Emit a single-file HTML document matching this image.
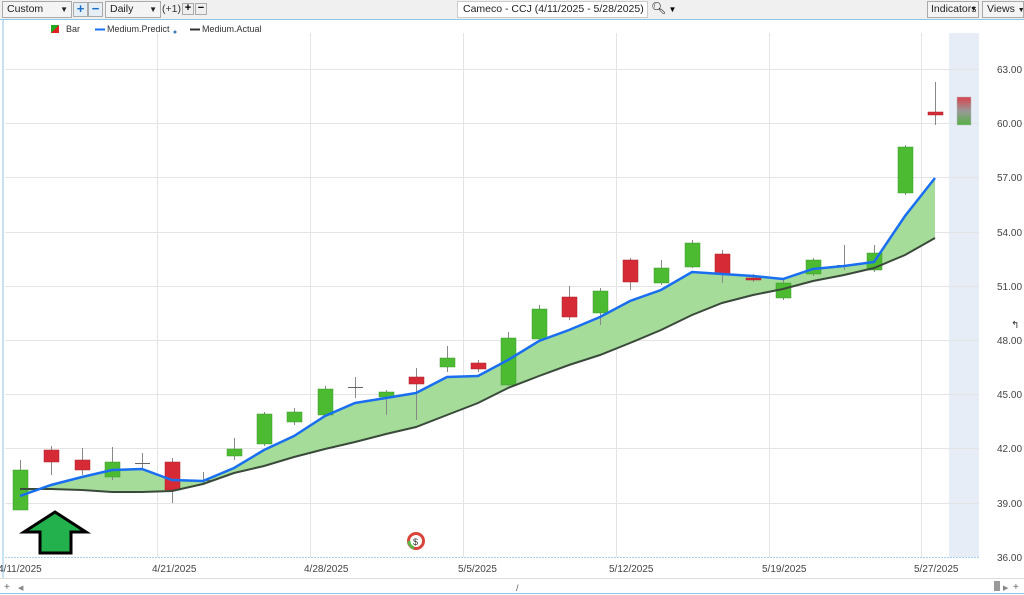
<!DOCTYPE html>
<html><head><meta charset="utf-8"><style>
body{margin:0;width:1024px;height:595px;overflow:hidden;background:#fff;font-family:"Liberation Sans",sans-serif;}
.tb{position:absolute;left:0;top:0;width:1024px;height:19px;background:#f0f0f0;border-bottom:1px solid #8ec6ea;}
.b{position:absolute;top:1px;height:15px;border:1px solid #aaa;background:#f4f4f4;font-size:10.5px;line-height:15px;color:#222;padding-left:4px;box-sizing:content-box;white-space:nowrap;overflow:hidden}
.sq{position:absolute;top:2px;width:13px;height:13px;border:1px solid #aaa;background:#e6eef6;color:#1a6fc4;font-weight:bold;font-size:13px;line-height:12px;text-align:center}
</style></head><body>
<div class="tb">
<div class="b" style="left:2px;width:64px">Custom<span style="position:absolute;right:3px;font-size:8px">▼</span></div>
<div class="sq" style="left:73px">+</div><div class="sq" style="left:88px">−</div>
<div class="b" style="left:105px;width:50px">Daily<span style="position:absolute;right:3px;font-size:8px">▼</span></div>
<div style="position:absolute;left:162px;top:3px;font-size:10.5px;color:#333">(+1)</div>
<div class="sq" style="left:182px;width:10px;height:10px;top:3px;color:#000;font-size:11px;line-height:9px;background:#eee">+</div>
<div class="sq" style="left:195px;width:10px;height:10px;top:3px;color:#000;font-size:11px;line-height:9px;background:#eee">−</div>
<div class="b" style="left:457px;top:1px;width:184px;background:#fff;border-color:#ccc;padding-left:5px">Cameco - CCJ (4/11/2025 - 5/28/2025)</div>
<div style="position:absolute;left:651px;top:1px;font-size:12px">&#x1F50D;&#xFE0E;<span style="font-size:8px"> ▼</span></div>
<div class="b" style="left:927px;width:47px;padding-left:3px">Indicators<span style="font-size:7px;position:absolute;right:1px;top:0">▼</span></div>
<div class="b" style="left:982px;width:36px">Views <span style="font-size:7px">▼</span></div>
</div>
<svg width="1024" height="595" style="position:absolute;left:0;top:0" font-family="Liberation Sans" >
<line x1="3" y1="20" x2="3" y2="578" stroke="#8ec6ea"/>
<rect x="949" y="33" width="30" height="524" fill="#e6edf6"/>
<g stroke="#e4e4e4" stroke-width="1">
<line x1="5" x2="979" y1="69.5" y2="69.5"/><line x1="5" x2="979" y1="123.5" y2="123.5"/><line x1="5" x2="979" y1="177.5" y2="177.5"/><line x1="5" x2="979" y1="232.5" y2="232.5"/><line x1="5" x2="979" y1="286.5" y2="286.5"/><line x1="5" x2="979" y1="340.5" y2="340.5"/><line x1="5" x2="979" y1="394.5" y2="394.5"/><line x1="5" x2="979" y1="448.5" y2="448.5"/><line x1="5" x2="979" y1="503.5" y2="503.5"/>
<line y1="33" y2="557" x1="157.5" x2="157.5"/><line y1="33" y2="557" x1="310.5" x2="310.5"/><line y1="33" y2="557" x1="463.5" x2="463.5"/><line y1="33" y2="557" x1="616.5" x2="616.5"/><line y1="33" y2="557" x1="769.5" x2="769.5"/><line y1="33" y2="557" x1="921.5" x2="921.5"/>
</g>
<line x1="5" x2="979" y1="557.5" y2="557.5" stroke="#a8d0ec" stroke-dasharray="2,1"/>
<g font-size="10" fill="#444">
<text x="997" y="73">63.00</text><text x="997" y="127">60.00</text><text x="997" y="181">57.00</text><text x="997" y="236">54.00</text><text x="997" y="290">51.00</text><text x="997" y="344">48.00</text><text x="997" y="398">45.00</text><text x="997" y="452">42.00</text><text x="997" y="507">39.00</text><text x="997" y="561">36.00</text>
<text x="-2" y="572">4/11/2025</text><text x="152" y="572">4/21/2025</text><text x="304" y="572">4/28/2025</text><text x="458" y="572">5/5/2025</text><text x="609" y="572">5/12/2025</text><text x="762" y="572">5/19/2025</text><text x="914" y="572">5/27/2025</text>
</g>
<polygon fill="#a6dc9a" points="20,496 51,485 82,477 112,470 142,469 172,480 203,481 234,468 264,450 294,436 325,416 355,403 386,398 416,393 447,377 478,376 508,360 539,341 569,330 600,317 630,301 661,290 692,272 722,274 753,276 783,279 813,269 844,266 874,262 905,216 935,178 935,238 905,255 874,268 844,275 813,281 783,289 753,295 722,303 692,315 661,330 630,343 600,355 569,365 539,376 508,388 478,403 447,415 416,427 386,434 355,442 325,449 294,457 264,466 234,473 203,484 172,491 142,492 112,492 82,490 51,489 20,489"/>
<g stroke="#888" stroke-width="1">
<line x1="20.5" x2="20.5" y1="460" y2="510"/><line x1="51.5" x2="51.5" y1="446" y2="475"/><line x1="82.5" x2="82.5" y1="448" y2="475"/><line x1="112.5" x2="112.5" y1="447" y2="480"/><line x1="142.5" x2="142.5" y1="453" y2="470"/><line x1="172.5" x2="172.5" y1="458" y2="503"/><line x1="203.5" x2="203.5" y1="472" y2="485"/><line x1="234.5" x2="234.5" y1="438" y2="460"/><line x1="264.5" x2="264.5" y1="412" y2="446"/><line x1="294.5" x2="294.5" y1="408" y2="425"/><line x1="325.5" x2="325.5" y1="386" y2="416"/><line x1="355.5" x2="355.5" y1="377" y2="398"/><line x1="386.5" x2="386.5" y1="390" y2="415"/><line x1="416.5" x2="416.5" y1="368" y2="420"/><line x1="447.5" x2="447.5" y1="346" y2="372"/><line x1="478.5" x2="478.5" y1="360" y2="372"/><line x1="508.5" x2="508.5" y1="332" y2="386"/><line x1="539.5" x2="539.5" y1="305" y2="340"/><line x1="569.5" x2="569.5" y1="286" y2="320"/><line x1="600.5" x2="600.5" y1="288" y2="325"/><line x1="630.5" x2="630.5" y1="258" y2="290"/><line x1="661.5" x2="661.5" y1="260" y2="285"/><line x1="692.5" x2="692.5" y1="240" y2="268"/><line x1="722.5" x2="722.5" y1="250" y2="283"/><line x1="753.5" x2="753.5" y1="274" y2="282"/><line x1="783.5" x2="783.5" y1="280" y2="300"/><line x1="813.5" x2="813.5" y1="258" y2="276"/><line x1="844.5" x2="844.5" y1="245" y2="270"/><line x1="874.5" x2="874.5" y1="245" y2="272"/><line x1="905.5" x2="905.5" y1="145" y2="195"/><line x1="935.5" x2="935.5" y1="82" y2="125"/>
</g>
<g fill="#4cbb32" stroke="#3a9a28" stroke-width=".5">
<rect x="13" y="470" width="15" height="40"/><rect x="105" y="462" width="15" height="15"/><rect x="227" y="449" width="15" height="7"/><rect x="257" y="414" width="15" height="30"/><rect x="287" y="412" width="15" height="10"/><rect x="318" y="389" width="15" height="26"/><rect x="379" y="392" width="15" height="5"/><rect x="440" y="358" width="15" height="9"/><rect x="501" y="338" width="15" height="47"/><rect x="532" y="309" width="15" height="30"/><rect x="593" y="291" width="15" height="22"/><rect x="654" y="268" width="15" height="15"/><rect x="685" y="243" width="15" height="24"/><rect x="776" y="283" width="15" height="15"/><rect x="806" y="260" width="15" height="14"/><rect x="867" y="253" width="15" height="17"/><rect x="898" y="147" width="15" height="46"/>
</g>
<g fill="#d62a36" stroke="#a82028" stroke-width=".5">
<rect x="44" y="450" width="15" height="12"/><rect x="75" y="460" width="15" height="10"/><rect x="165" y="462" width="15" height="28"/><rect x="409" y="377" width="15" height="7"/><rect x="471" y="363" width="15" height="6"/><rect x="562" y="297" width="15" height="20"/><rect x="623" y="260" width="15" height="22"/><rect x="715" y="254" width="15" height="20"/><rect x="746" y="278" width="15" height="2"/><rect x="928" y="112" width="15" height="3"/>
</g>
<g stroke="#666"><line x1="135" x2="150" y1="463.5" y2="463.5"/><line x1="196" x2="211" y1="480.5" y2="480.5"/><line x1="348" x2="363" y1="387.5" y2="387.5"/><line x1="837" x2="852" y1="265.5" y2="265.5"/></g>
<defs><linearGradient id="g" x1="0" y1="0" x2="0" y2="1"><stop offset="0" stop-color="#d8434c"/><stop offset=".5" stop-color="#999"/><stop offset="1" stop-color="#55b045"/></linearGradient></defs>
<rect x="957" y="97" width="14" height="28" fill="url(#g)" stroke="#bbb" stroke-width=".5"/>
<polyline fill="none" stroke="#3a4a3a" stroke-width="2" points="20,489 51,489 82,490 112,492 142,492 172,491 203,484 234,473 264,466 294,457 325,449 355,442 386,434 416,427 447,415 478,403 508,388 539,376 569,365 600,355 630,343 661,330 692,315 722,303 753,295 783,289 813,281 844,275 874,268 905,255 935,238"/>
<polyline fill="none" stroke="#1a6ff0" stroke-width="2.5" points="20,496 51,485 82,477 112,470 142,469 172,480 203,481 234,468 264,450 294,436 325,416 355,403 386,398 416,393 447,377 478,376 508,360 539,341 569,330 600,317 630,301 661,290 692,272 722,274 753,276 783,279 813,269 844,266 874,262 905,216 935,178"/>
<polygon points="55,512 86,532 71,532 71,553 40,553 40,532 24,532" fill="#22b14c" stroke="#000" stroke-width="3"/>
<circle cx="416" cy="541" r="7.5" fill="none" stroke="#d9443a" stroke-width="3"/>
<path d="M409 541 A7.5 7.5 0 0 0 414 548" fill="none" stroke="#5ab848" stroke-width="3"/>
<text x="413" y="545" font-size="9" fill="#333">$</text>
<rect x="51" y="25" width="8" height="8" fill="#22aa22"/><polygon points="59,25 59,33 51,33" fill="#dd2222"/>
<text x="66" y="32" font-size="9" fill="#333">Bar</text>
<line x1="95" x2="105" y1="29.5" y2="29.5" stroke="#1a6ff0" stroke-width="2"/>
<text x="107" y="32" font-size="9" fill="#333">Medium.Predict</text><circle cx="175" cy="32" r="1.5" fill="#3a7ab8"/>
<line x1="190" x2="200" y1="29.5" y2="29.5" stroke="#333" stroke-width="2"/>
<text x="202" y="32" font-size="9" fill="#333">Medium.Actual</text>
<text x="1011" y="328" font-size="10" fill="#333">↰</text>
<line x1="0" x2="1024" y1="578.5" y2="578.5" stroke="#ddd"/>
<rect x="0" y="579" width="1024" height="14" fill="#fff"/>
<line x1="0" x2="1024" y1="593.5" y2="593.5" stroke="#8ec6ea"/>
<text x="4" y="590" font-size="10" fill="#666">+</text><text x="18" y="590" font-size="7" fill="#888">◀</text>
<rect x="994" y="581" width="6" height="10" fill="#999"/><text x="1003" y="590" font-size="7" fill="#888">▶</text><text x="1013" y="590" font-size="10" fill="#666">+</text>
<text x="516" y="591" font-size="9" fill="#555">/</text>
</svg>
</body></html>
